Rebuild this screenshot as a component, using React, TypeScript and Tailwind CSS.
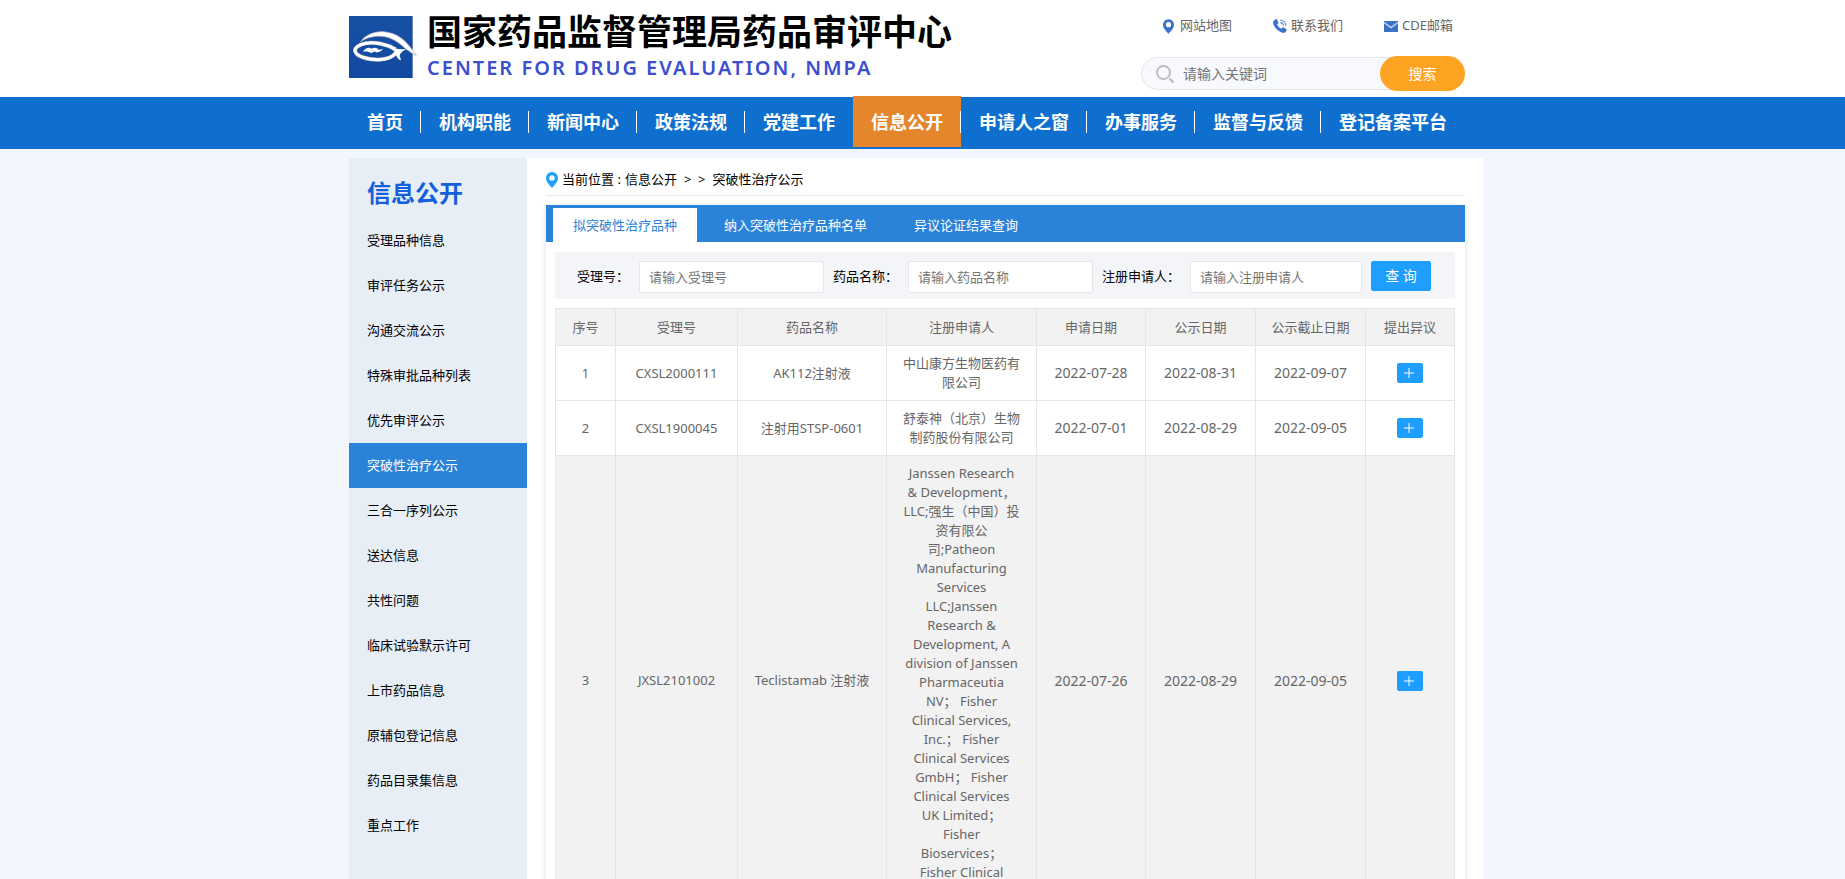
import { Plus } from 'lucide-react';

const navItems = ['首页', '机构职能', '新闻中心', '政策法规', '党建工作', '信息公开', '申请人之窗', '办事服务', '监督与反馈', '登记备案平台'];

const sideItems = [
  '受理品种信息',
  '审评任务公示',
  '沟通交流公示',
  '特殊审批品种列表',
  '优先审评公示',
  '突破性治疗公示',
  '三合一序列公示',
  '送达信息',
  '共性问题',
  '临床试验默示许可',
  '上市药品信息',
  '原辅包登记信息',
  '药品目录集信息',
  '重点工作',
];

const tabs = ['拟突破性治疗品种', '纳入突破性治疗品种名单', '异议论证结果查询'];

const columns = [
  { title: '序号', width: 'w-[60px]' },
  { title: '受理号', width: 'w-[122px]' },
  { title: '药品名称', width: 'w-[149px]' },
  { title: '注册申请人', width: 'w-[150px]' },
  { title: '申请日期', width: 'w-[109px]' },
  { title: '公示日期', width: 'w-[110px]' },
  { title: '公示截止日期', width: 'w-[110px]' },
  { title: '提出异议', width: 'w-[89px]' },
];

const rows = [
  {
    no: 'CXSL2000111',
    drug: 'AK112注射液',
    applicant: ['中山康方生物医药有', '限公司'],
    dates: ['2022-07-28', '2022-08-31', '2022-09-07'],
    style: 'h-[55px] bg-white',
  },
  {
    no: 'CXSL1900045',
    drug: '注射用STSP-0601',
    applicant: ['舒泰神（北京）生物', '制药股份有限公司'],
    dates: ['2022-07-01', '2022-08-29', '2022-09-05'],
    style: 'h-[55px] bg-white',
  },
  {
    no: 'JXSL2101002',
    drug: 'Teclistamab 注射液',
    applicant: [
      'Janssen Research',
      '& Development，',
      'LLC;强生（中国）投',
      '资有限公',
      '司;Patheon',
      'Manufacturing',
      'Services',
      'LLC;Janssen',
      'Research &',
      'Development, A',
      'division of Janssen',
      'Pharmaceutia',
      'NV； Fisher',
      'Clinical Services,',
      'Inc.； Fisher',
      'Clinical Services',
      'GmbH； Fisher',
      'Clinical Services',
      'UK Limited；',
      'Fisher',
      'Bioservices；',
      'Fisher Clinical',
    ],
    dates: ['2022-07-26', '2022-08-29', '2022-09-05'],
    style: 'h-[450px] bg-[#f2f2f2]',
  },
];

function Logo() {
  return (
    <svg viewBox="0 0 204 186" className="h-[62px] w-[68px] shrink-0" aria-label="CDE">
      <defs>
        <linearGradient id="logoBg" x1="0" y1="0" x2="0" y2="1">
          <stop offset="0" stopColor="#1650a4" />
          <stop offset="1" stopColor="#1149a0" />
        </linearGradient>
      </defs>
      <rect width="191" height="186" fill="url(#logoBg)" />
      <path
        d="M34 78 C48 56 78 45 106 47 C142 51 166 69 184 94 C192 104 198 112 202 119 C192 114 180 105 166 95 C142 73 118 61 92 61 C66 61 48 68 34 78 Z"
        fill="#fff"
        stroke="#a9a3b4"
        strokeWidth="2"
      />
      <path
        d="M140 100 C114 84 76 77 50 82 C28 87 18 96 18 104 C20 120 52 131 88 131 C114 130 134 122 142 108"
        fill="none"
        stroke="#b4aeb8"
        strokeWidth="12"
      />
      <path
        d="M140 100 C114 84 76 77 50 82 C28 87 18 96 18 104 C20 120 52 131 88 131 C114 130 134 122 142 108"
        fill="none"
        stroke="#fff"
        strokeWidth="9"
      />
      <path d="M116 90 C136 98 152 102 174 99 C160 105 154 111 152 118 L156 133 C148 131 141 122 139 108 Z" fill="#fff" />
      <path
        d="M42 107 C48 97 60 92 68 98 C74 93 86 96 88 101 L102 100 C96 106 88 110 82 109 C76 106 72 108 68 112 C60 106 52 106 42 107 Z"
        fill="#fff"
      />
    </svg>
  );
}

function Pin({ className }: { className: string }) {
  return (
    <svg viewBox="0 0 12 16" className={className} fill="currentColor" aria-hidden="true">
      <path fillRule="evenodd" d="M6 0a6 6 0 0 1 6 6c0 3.6-3.4 7-6 10-2.6-3-6-6.4-6-10a6 6 0 0 1 6-6Zm0 3.2a2.8 2.8 0 1 0 0 5.6 2.8 2.8 0 0 0 0-5.6Z" />
    </svg>
  );
}

function Phone() {
  return (
    <svg viewBox="0 0 14 14" className="h-[14px] w-[14px] text-[#3b73c8]" aria-hidden="true">
      <path
        fill="currentColor"
        d="M1.2 1.2 3 .2c.5-.2.9 0 1.100.4l1.300 2.800c.2.4.1.8-.2 1.100l-1 .9c.7 1.900 2.200 3.400 4.200 4.400l1-1.200c.3-.3.7-.4 1.100-.2l2.800 1.500c.4.2.6.7.4 1.100-.5 1.500-1.500 2.700-3 2.900C5.500 13.400.3 8 .1 3.600c0-1 .3-1.900 1.100-2.400Z"
      />
      <path fill="none" stroke="currentColor" strokeWidth="1.2" opacity="0.75" d="M7.2 1.2a5.6 5.6 0 0 1 5.6 5.6M7.2 3.6a3.3 3.3 0 0 1 3.2 3.2" />
    </svg>
  );
}

function Mail() {
  return (
    <svg viewBox="0 0 14 11" className="h-[11px] w-[14px]" aria-hidden="true">
      <rect width="14" height="11" fill="#3b73c8" />
      <path d="M0 1.500 7 6.600l7-5.100" fill="none" stroke="#c9dbf5" strokeWidth="1.3" />
    </svg>
  );
}

function Field({ id, label, placeholder, width }: { id: string; label: string; placeholder: string; width: string }) {
  return (
    <div className="flex items-center gap-2.5">
      <label htmlFor={id}>{label}</label>
      <input
        id={id}
        type="text"
        placeholder={placeholder}
        className={`h-8 rounded-[2px] border border-[#e6e6e6] bg-white px-[9px] placeholder:text-[#757575] ${width}`}
      />
    </div>
  );
}

function Header() {
  return (
    <header className="bg-white">
      <div className="mx-auto flex h-[97px] max-w-[1147px] items-start justify-between pr-[31px]">
        <a href="#" className="flex gap-2.5 pt-[10px]">
          <span className="pt-1.5">
            <Logo />
          </span>
          <span className="flex flex-col whitespace-nowrap">
            <span className="text-[35px] leading-[44px] font-bold text-black">国家药品监督管理局药品审评中心</span>
            <span className="text-xl leading-7 font-semibold tracking-widest text-[#3c4fcf]">CENTER FOR DRUG EVALUATION, NMPA</span>
          </span>
        </a>
        <div className="flex w-[324px] flex-col">
          <div className="flex h-[52px] items-center justify-between pr-3 pl-[22px] text-[13px] text-[#666]">
            <a href="#" className="flex items-center gap-1.5">
              <Pin className="h-[15px] w-[11px] text-[#3b73c8]" />
              网站地图
            </a>
            <a href="#" className="flex items-center gap-1">
              <Phone />
              联系我们
            </a>
            <a href="#" className="flex items-center gap-1">
              <Mail />
              CDE邮箱
            </a>
          </div>
          <form className="flex items-center pt-1">
            <div className="-mr-5 flex h-[33px] flex-1 items-center gap-[9px] rounded-l-full border border-[#e4e6e8] bg-[#f8f9fd] pl-3.5">
              <svg viewBox="0 0 18 18" className="h-[18px] w-[18px] shrink-0" fill="none" stroke="#bfbfbf" strokeWidth="2" aria-hidden="true">
                <circle cx="7.5" cy="7.5" r="6.5" />
                <path d="m13.500 13.500 4 4" strokeWidth="2.4" />
              </svg>
              <input type="text" aria-label="关键词" placeholder="请输入关键词" className="w-full min-w-0 bg-transparent text-sm placeholder:text-[#757575]" />
            </div>
            <button type="button" className="relative h-[35px] w-[85px] rounded-full bg-[#ffa422] text-sm text-white">
              搜索
            </button>
          </form>
        </div>
      </div>
    </header>
  );
}

function Nav() {
  return (
    <nav className="bg-[#0e6fce]">
      <ul className="mx-auto flex h-[52px] max-w-[1147px] text-lg font-bold whitespace-nowrap text-white">
        {navItems.map((item, i) => (
          <li key={item} className={item === '信息公开' ? '-mt-px mb-0.5 bg-[#e5862d] pt-px' : 'mb-0.5'}>
            <a href="#" className="flex h-full items-center">
              <span className={`flex h-[22px] items-center px-[18px] ${i < navItems.length - 1 && item !== '党建工作' ? 'shadow-[inset_-1px_0_0_#fff]' : ''}`}>
                {item}
              </span>
            </a>
          </li>
        ))}
      </ul>
    </nav>
  );
}

function Sidebar() {
  return (
    <aside className="w-[178px] shrink-0 bg-[#e7eef6]">
      <h2 className="h-[60px] px-[18px] text-2xl leading-[70px] font-bold text-[#1460dc]">信息公开</h2>
      <ul>
        {sideItems.map((item) => (
          <li key={item}>
            <a
              href="#"
              className={`block h-[45px] px-[18px] text-[13px] leading-[45px] ${item === '突破性治疗公示' ? 'bg-[#2b83d9] text-white' : 'text-black'}`}
            >
              {item}
            </a>
          </li>
        ))}
      </ul>
    </aside>
  );
}

function ResultTable() {
  return (
    <table className="w-full table-fixed border-collapse text-center text-[13px] leading-[19px] text-[#666]">
      <thead>
        <tr className="h-[37px] bg-[#f2f2f2]">
          {columns.map((col) => (
            <th key={col.title} className={`border border-[#e6e6e6] font-normal ${col.width}`}>
              {col.title}
            </th>
          ))}
        </tr>
      </thead>
      <tbody>
        {rows.map((row, i) => (
          <tr key={row.no} className={row.style}>
            <td className="border border-[#e6e6e6]">{i + 1}</td>
            <td className="border border-[#e6e6e6]">{row.no}</td>
            <td className="border border-[#e6e6e6]">{row.drug}</td>
            <td className="border border-[#e6e6e6] py-2 align-top whitespace-nowrap">
              {row.applicant.map((line, n) => (
                <span key={n} className="block">
                  {line}
                </span>
              ))}
            </td>
            {row.dates.map((date, n) => (
              <td key={n} className="border border-[#e6e6e6] text-sm">
                {date}
              </td>
            ))}
            <td className="border border-[#e6e6e6]">
              <button type="button" aria-label="提出异议" className="inline-flex h-5 w-[26px] items-center justify-center rounded-[2px] bg-[#1e9fff] pr-0.5 align-middle text-white">
                <Plus size={16} strokeWidth={1.5} />
              </button>
            </td>
          </tr>
        ))}
      </tbody>
    </table>
  );
}

export default function App() {
  return (
    <div className="min-h-screen bg-[#f2f7ff] font-['Noto_Sans','Noto_Sans_CJK_SC',sans-serif]">
      <Header />
      <Nav />
      <div className="mx-auto max-w-[1147px] pt-[9px] pr-[13px]">
        <div className="flex bg-white">
          <Sidebar />
          <main className="min-w-0 flex-1 pr-[18px] pl-[19px] text-[13px]">
            <div className="flex h-[38px] items-center gap-1 border-b border-[#e6e6e6] pt-1.5 text-black">
              <Pin className="h-4 w-3 text-[#1e9fff]" />
              <span>当前位置 :</span>
              <a href="#">信息公开</a>
              <span className="px-[3px]">&gt;&nbsp; &gt;</span>
              <a href="#">突破性治疗公示</a>
            </div>
            <section className="mt-[9px] shadow-[0_2px_6px_rgba(0,40,90,0.15)]">
              <div role="tablist" className="flex h-[37px] gap-[7px] bg-[#2b83d9] pt-[3px] pl-[7px]">
                {tabs.map((tab, i) => (
                  <button key={tab} type="button" role="tab" aria-selected={i === 0} className={`px-5 pt-0.5 ${i === 0 ? 'bg-white text-[#2b83d9]' : 'text-white'}`}>
                    {tab}
                  </button>
                ))}
              </div>
              <div className="bg-white pt-2.5 pr-2.5 pl-[9px]">
                <form className="mb-[9px] flex h-[47px] items-start gap-[9px] bg-[#f4f5f9] pt-[9px] pl-[22px] text-black">
                  <Field id="acceptNo" label="受理号：" placeholder="请输入受理号" width="w-[185px]" />
                  <Field id="drugName" label="药品名称：" placeholder="请输入药品名称" width="w-[185px]" />
                  <Field id="applicant" label="注册申请人：" placeholder="请输入注册申请人" width="w-[172px]" />
                  <button type="button" className="h-[30px] w-[60px] rounded-[2px] bg-[#1e9fff] text-sm text-white">
                    查 询
                  </button>
                </form>
                <ResultTable />
              </div>
            </section>
          </main>
        </div>
      </div>
    </div>
  );
}
